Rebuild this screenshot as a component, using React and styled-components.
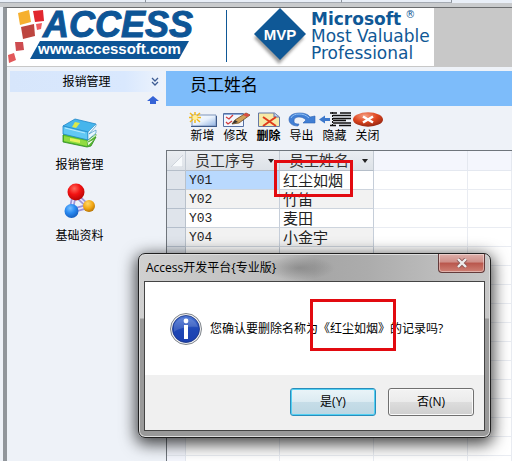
import React from 'react';
import styled, { createGlobalStyle } from 'styled-components';

const columns = ['员工序号', '员工姓名'];

const employees = [
  { code: 'Y01', name: '红尘如烟' },
  { code: 'Y02', name: '竹笛' },
  { code: 'Y03', name: '麦田' },
  { code: 'Y04', name: '小金宇' },
  { code: '', name: '' },
];

const emptyRows = Array.from({ length: 14 }, (_, i) => i);

const NewIcon = () => (
  <svg width="30" height="15" viewBox="0 0 30 15">
    <defs>
      <linearGradient id="sheet" x1="0" y1="0" x2="1" y2="1">
        <stop offset="0" stopColor="#fff" />
        <stop offset=".5" stopColor="#e8f1fc" />
        <stop offset="1" stopColor="#8fb2e2" />
      </linearGradient>
    </defs>
    <path d="M4 3h24v11H4z" fill="url(#sheet)" stroke="#7e95ba" />
    <path d="M3 14.5h26M28.5 4v10" stroke="#3d5988" />
    <path d="M7 0v11M1 5.500h12M2 1l10 9M12 1L2 10" stroke="#f2b91b" strokeWidth="1.500" />
    <circle cx="7" cy="5.500" r="2.500" fill="#ffef9c" />
  </svg>
);

const EditIcon = () => (
  <svg width="30" height="15" viewBox="0 0 30 15">
    <path d="M2.500 1.500h20v13h-20z" fill="#f3f7fe" stroke="#5670a2" />
    <path d="M3 2.500h19" stroke="#8ba9d8" />
    <path d="M5 5l3 2 4-4M5 10l2 2 4-3" fill="none" stroke="#d33a3a" strokeWidth="1.300" />
    <path d="M11 12l3-4L25 1l4 2-11 8z" fill="#d0a058" stroke="#6d4a22" strokeWidth=".8" />
    <path d="M25 1l4 2-3 2-4-2z" fill="#d84b43" />
    <path d="M11 12l3-4 3 2z" fill="#333" />
  </svg>
);

const DeleteIcon = () => (
  <svg width="30" height="15" viewBox="0 0 30 15">
    <path d="M4.500 1h16l5 4v9.500h-21z" fill="#f6e9a6" stroke="#6578a6" />
    <path d="M20 1v4h5" fill="#b9cdef" stroke="#6578a6" />
    <path d="M9 5l13 9M22 5L9 14" stroke="#df3b1c" strokeWidth="2" />
  </svg>
);

const ExportIcon = () => (
  <svg width="30" height="15" viewBox="0 0 30 15">
    <path
      d="M11 14C5 14 2 11 2 7.500 2 3 7 1 13 1c4 0 8 1 10 4l5-1v7H16l3-3c-2-2-4-3-7-3-3 0-5 1-5 4 0 2 1 3 5 3z"
      fill="#417fd4"
      stroke="#2d62b3"
      strokeWidth=".6"
    />
    <path d="M4 6c1-3 5-4 8-4 4 0 7 1 10 4" fill="none" stroke="#8fc0f5" />
  </svg>
);

const HideIcon = () => (
  <svg width="32" height="15" viewBox="0 0 32 15">
    <path d="M11 1h7M21 1h11M14 3.500h18M14 6.500h18M14 8.500h13M14 11h18M11 13.500h6M20 13.500h12" stroke="#111" strokeWidth="1.400" />
    <path d="M13.500 0v15" stroke="#111" strokeDasharray="2 1" />
    <path d="M0 7.500l6-4v2.500h5v3H6v2.500z" fill="#3c78cc" />
  </svg>
);

const CloseIcon = () => (
  <svg width="30" height="15" viewBox="0 0 30 15">
    <defs>
      <radialGradient id="closeRed" cx=".4" cy=".25" r=".8">
        <stop offset="0" stopColor="#f5a184" />
        <stop offset=".5" stopColor="#df4620" />
        <stop offset="1" stopColor="#8d2310" />
      </radialGradient>
    </defs>
    <ellipse cx="15" cy="7.500" rx="15" ry="7.200" fill="url(#closeRed)" />
    <path d="M10 4.500l10 6M20 4.500l-10 6" stroke="#fff" strokeWidth="2.600" />
  </svg>
);

const BooksIcon = () => (
  <svg width="36" height="30" viewBox="0 0 36 30">
    <path d="M1 17l4-3 29 5-5 9-4 1-24-5z" fill="#57bd2a" stroke="#2c8b20" strokeWidth=".8" />
    <path d="M2 18l23 5v5L2 23z" fill="#91dc42" />
    <path d="M8 20l10 2v3L8 23z" fill="#e7f35b" />
    <path d="M25 23l9-7v2l-8 6 7-3-7 7z" fill="#eafbe0" stroke="#47a42b" strokeWidth=".6" />
    <path d="M1 8L13 1l21 5-8 10z" fill="#46b5ec" stroke="#1f87c8" strokeWidth=".8" />
    <path d="M1 8l25 6v8L1 16z" fill="#62c8f4" stroke="#1f87c8" strokeWidth=".8" />
    <path d="M26 14l8-8v2l-7 8 7-4v3l-8 7z" fill="#e8f8ff" stroke="#2c8cc2" strokeWidth=".6" />
    <path d="M13 4l5 1-4 5-4-1z" fill="#d9e84b" />
    <path d="M3 10l20 5" stroke="#b8ebff" />
  </svg>
);

const MoleculeIcon = () => (
  <svg width="32" height="36" viewBox="0 0 32 36">
    <defs>
      <radialGradient id="redBall" cx=".4" cy=".3" r=".7">
        <stop offset="0" stopColor="#ff6a5c" />
        <stop offset=".5" stopColor="#f31313" />
        <stop offset="1" stopColor="#b80505" />
      </radialGradient>
      <radialGradient id="blueBall" cx=".4" cy=".3" r=".7">
        <stop offset="0" stopColor="#77c0ff" />
        <stop offset=".5" stopColor="#2a8bf2" />
        <stop offset="1" stopColor="#155fc0" />
      </radialGradient>
      <radialGradient id="goldBall" cx=".4" cy=".3" r=".7">
        <stop offset="0" stopColor="#ffd768" />
        <stop offset=".6" stopColor="#f2a612" />
        <stop offset="1" stopColor="#b97708" />
      </radialGradient>
    </defs>
    <path d="M10 13L7 28M14 14L25 24M7 28L25 23" stroke="#9c94d8" strokeWidth="5" />
    <path d="M10 13L7 28M14 14L25 24M7 28L25 23" stroke="#e9e5ff" strokeWidth="1.500" />
    <circle cx="12" cy="9" r="8.500" fill="url(#redBall)" />
    <circle cx="7.500" cy="28" r="7" fill="url(#blueBall)" />
    <circle cx="25" cy="23" r="6" fill="url(#goldBall)" />
  </svg>
);

const AccessLogo = () => (
  <svg width="192" height="58" viewBox="0 0 192 58" role="img" aria-label="ACCESS">
    <path d="M11 5l11-3 2 12-11 3z" fill="#f6b02f" />
    <path d="M26 3l10-1 1 11-9 1z" fill="#e1272f" />
    <path d="M14 19l13-3 1 12-12 3z" fill="#bd4640" />
    <path d="M29 16l6-1-1 6-4 1z" fill="#ee5c60" />
    <path d="M8 34l8 0 1 8-8 1z" fill="#cd4c50" />
    <path d="M1 47l6-2 2 7-7 3z" fill="#e2595b" />
    <path d="M33 33h149l-10 18H23z" fill="#0d5596" />
    <LogoWord x="36" y="29">ACCESS</LogoWord>
    <LogoUrl x="31" y="46">www.accessoft.com</LogoUrl>
  </svg>
);

const MvpLogo = () => (
  <svg width="56" height="58" viewBox="0 0 56 58" role="img" aria-label="MVP">
    <defs>
      <filter id="mvpShadow" x="-20%" y="-20%" width="140%" height="140%">
        <feGaussianBlur stdDeviation="1.500" />
      </filter>
    </defs>
    <path d="M27 5l25 25-25 26L2 30z" fill="#777" opacity=".7" filter="url(#mvpShadow)" />
    <path d="M28 0l26 26-26 26L2 26z" fill="#0f5896" />
    <MvpWord x="28" y="32" textAnchor="middle">MVP</MvpWord>
  </svg>
);

const InfoIcon = () => (
  <svg width="32" height="32" viewBox="0 0 32 32">
    <defs>
      <linearGradient id="infoBlue" x1="0" y1="0" x2="0" y2="1">
        <stop offset="0" stopColor="#4f79d6" />
        <stop offset=".5" stopColor="#1f48b6" />
        <stop offset="1" stopColor="#1b3fae" />
      </linearGradient>
    </defs>
    <circle cx="16" cy="16" r="15.500" fill="#f2f2f2" stroke="#7f858c" />
    <circle cx="16" cy="16" r="13.500" fill="url(#infoBlue)" stroke="#173180" strokeWidth=".8" />
    <path d="M4 19c5-4 14-6 24-5a13 13 0 0 0-24-2z" fill="#fff" opacity=".15" />
    <circle cx="16" cy="8" r="2.400" fill="#fff" />
    <path d="M14 12h4v14h-4z" fill="#fff" />
  </svg>
);

const tools = [
  { label: '新增', icon: <NewIcon /> },
  { label: '修改', icon: <EditIcon /> },
  { label: '删除', icon: <DeleteIcon />, active: true },
  { label: '导出', icon: <ExportIcon /> },
  { label: '隐藏', icon: <HideIcon /> },
  { label: '关闭', icon: <CloseIcon /> },
];

const App = () => {
  return (
    <>
      <GlobalStyle />
      <Page>
        <TopEdge>
          <EdgeTab $width="146px" />
          <EdgeTab $width="196px" />
          <EdgeTab $width="110px" />
        </TopEdge>
        <Frame>
          <Banner>
            <BannerArt>
              <AccessLogo />
              <Divider />
              <MvpLogo />
              <MvpText>
                <div>
                  <strong>Microsoft</strong>
                  <sup>®</sup>
                </div>
                <div>Most Valuable</div>
                <div>Professional</div>
              </MvpText>
            </BannerArt>
          </Banner>
          <Body>
            <Sidebar>
              <SidebarTitle>
                报销管理
                <Chevrons width="8" height="10" viewBox="0 0 8 10">
                  <path d="M1 1l3 3 3-3M1 5l3 3 3-3" fill="none" stroke="#3d5c94" strokeWidth="1.300" />
                </Chevrons>
              </SidebarTitle>
              <ScrollUp type="button" aria-label="向上">
                <svg width="12" height="8" viewBox="0 0 12 8">
                  <path d="M6 0l6 5H9v3H3V5H0z" fill="#3563d6" />
                </svg>
              </ScrollUp>
              <SidebarItems>
                <SidebarItem type="button">
                  <BooksIcon />
                  报销管理
                </SidebarItem>
                <SidebarItem type="button">
                  <MoleculeIcon />
                  基础资料
                </SidebarItem>
              </SidebarItems>
            </Sidebar>
            <Main>
              <Heading>员工姓名</Heading>
              <Toolbar>
                {tools.map((tool) => (
                  <ToolButton key={tool.label} type="button" $active={tool.active}>
                    {tool.icon}
                    {tool.label}
                  </ToolButton>
                ))}
              </Toolbar>
              <Datasheet>
                <Table>
                  <colgroup>
                    <Col $width="19px" />
                    <Col $width="94px" />
                    <Col $width="94px" />
                    <Col $width="94px" />
                    <col />
                  </colgroup>
                  <thead>
                    <tr>
                      <HeadCell>
                        <Corner width="12" height="12" viewBox="0 0 12 12">
                          <path d="M12 0v12H0z" fill="#f7fafc" stroke="#cfd5dc" />
                        </Corner>
                      </HeadCell>
                      {columns.map((column) => (
                        <HeadCell key={column} scope="col">
                          <HeadLabel>
                            {column}
                            <svg width="6" height="4" viewBox="0 0 6 4">
                              <path d="M0 0h6L3 4z" fill="#222" />
                            </svg>
                          </HeadLabel>
                        </HeadCell>
                      ))}
                      <BlankHead />
                      <BlankHead />
                    </tr>
                  </thead>
                  <tbody>
                    {employees.map((employee, index) => (
                      <tr key={index}>
                        <Selector />
                        <CodeCell $alt={index % 2 === 1} $selected={index === 0}>
                          {employee.code}
                        </CodeCell>
                        <Cell $alt={index % 2 === 1}>{employee.name}</Cell>
                        <BlankCell />
                        <BlankCell />
                      </tr>
                    ))}
                    {emptyRows.map((row) => (
                      <tr key={row}>
                        <BlankHead as="td" />
                        <BlankCell />
                        <BlankCell />
                        <BlankCell />
                        <BlankCell />
                      </tr>
                    ))}
                  </tbody>
                </Table>
              </Datasheet>
            </Main>
          </Body>
        </Frame>
        <RowMark />
        <Dialog role="dialog" aria-labelledby="dialog-title">
          <TitleBar>
            <DialogTitle id="dialog-title">Access开发平台{'{'}专业版{'}'}</DialogTitle>
            <DialogClose type="button" aria-label="关闭">
              <svg width="12" height="10" viewBox="0 0 12 10">
                <path d="M2 1l8 8M10 1L2 9" stroke="#8e5a58" strokeWidth="4" />
                <path d="M2 1l8 8M10 1L2 9" stroke="#eee" strokeWidth="2.400" />
              </svg>
            </DialogClose>
          </TitleBar>
          <Client>
            <Message>
              <InfoIcon />
              <span>您确认要删除名称为《红尘如烟》的记录吗?</span>
            </Message>
            <Actions>
              <DialogButton type="button" $primary>
                是(Y)
              </DialogButton>
              <DialogButton type="button">否(N)</DialogButton>
            </Actions>
          </Client>
          <NameMark />
        </Dialog>
      </Page>
    </>
  );
};

export default App;

const GlobalStyle = createGlobalStyle`
  * {
    box-sizing: border-box;
  }
  body {
    margin: 0;
    color: #000;
    font: 12px/16px "Liberation Sans", "Noto Sans CJK SC", sans-serif;
  }
  button {
    padding: 0;
    border: 0;
    background: none;
    color: inherit;
    font: inherit;
  }
  svg {
    display: block;
    flex: none;
  }
`;
const Page = styled.div`
  position: relative;
  display: flex;
  flex-direction: column;
  height: 100vh;
  overflow: hidden;
  background: #eef2f8;
`;
const TopEdge = styled.div`
  display: flex;
  flex: none;
  height: 7px;
  border-bottom: 4px solid #c9cbcd;
  background: #e9eff8;
`;
const EdgeTab = styled.span`
  width: ${(props) => props.$width};
  border-right: 1px solid #8d949d;
  border-bottom: 1px solid #a4aab2;
`;
const Frame = styled.div`
  display: flex;
  flex: 1;
  flex-direction: column;
  min-height: 0;
  margin-left: 3px;
  border-top: 1px solid #6a6c6e;
  border-left: 4px solid #91969b;
`;
const Banner = styled.header`
  display: flex;
  flex: none;
  height: 59px;
  border-bottom: 1px solid #c8c8c8;
  background: #c8c8c8;
`;
const BannerArt = styled.div`
  display: flex;
  width: 427px;
  background: #fff;
`;
const LogoWord = styled.text`
  fill: #0d5596;
  stroke: #0d5596;
  stroke-width: 1px;
  font: italic bold 36px "Liberation Sans", sans-serif;
`;
const LogoUrl = styled.text`
  fill: #fff;
  font: bold 15px "Liberation Sans", sans-serif;
`;
const Divider = styled.div`
  width: 1px;
  margin: 2px 25px 4px 27px;
  background: #0f5896;
`;
const MvpWord = styled.text`
  fill: #fff;
  font: bold 15px "Liberation Sans", sans-serif;
`;
const MvpText = styled.div`
  padding: 3px 0 0 3px;
  color: #0f5896;
  font: 17px/17px "DejaVu Sans", sans-serif;
  white-space: nowrap;

  sup {
    margin-left: 4px;
    font-size: 10px;
    line-height: 1px;
  }
`;
const Body = styled.div`
  display: flex;
  flex: 1;
  min-height: 0;
  padding-top: 4px;
`;
const Sidebar = styled.nav`
  display: flex;
  flex: none;
  flex-direction: column;
  width: 159px;
  padding: 0 3px;
`;
const SidebarTitle = styled.div`
  display: flex;
  align-items: center;
  justify-content: center;
  position: relative;
  height: 21px;
  background: linear-gradient(to right, #d7e6fb, #d9e8fe 75%, #edf3fc);
`;
const Chevrons = styled.svg`
  position: absolute;
  right: 4px;
`;
const ScrollUp = styled.button`
  align-self: flex-end;
  margin: 4px 4px 14px 0;
`;
const SidebarItems = styled.div`
  display: flex;
  flex-direction: column;
  align-items: center;
  gap: 10px;
  padding-right: 14px;
`;
const SidebarItem = styled.button`
  display: flex;
  flex-direction: column;
  align-items: center;
  gap: 9px;
  width: 72px;
`;
const Main = styled.main`
  display: flex;
  flex: 1;
  flex-direction: column;
  min-width: 0;
`;
const Heading = styled.h1`
  flex: none;
  margin: 0;
  padding: 3px 24px 0;
  height: 35px;
  background: #7dbcfa;
  font-size: 17px;
  font-weight: 400;
  line-height: 24px;
`;
const Toolbar = styled.div`
  display: flex;
  flex: none;
  height: 44px;
  padding: 6px 20px 0;
`;
const ToolButton = styled.button`
  display: flex;
  flex-direction: column;
  align-items: center;
  width: 33px;
  gap: 1px;
  height: 32px;
  font-weight: ${(props) => (props.$active ? 'bold' : 'normal')};
`;
const Datasheet = styled.div`
  flex: 1;
  min-height: 0;
  overflow: hidden;
  border-top: 1px solid #6f757c;
  border-left: 1px solid #6f757c;
  background: #fff;
`;
const Table = styled.table`
  width: 100%;
  border-spacing: 0;
  table-layout: fixed;
`;
const Col = styled.col`
  width: ${(props) => props.$width};
`;
const Cell = styled.td`
  height: 19px;
  padding: 2px 3px 0;
  border-right: 1px solid #c6ced9;
  border-bottom: 1px solid #cdd4dd;
  background: ${(props) => (props.$selected ? '#b9d9fe' : props.$alt ? '#f2f2f2' : '#fff')};
  color: #222;
  font-size: 15px;
  line-height: 16px;
  white-space: nowrap;
`;
const CodeCell = styled(Cell)`
  font-family: "Liberation Mono", monospace;
  font-size: 13px;
`;
const HeadCell = styled.th`
  height: 20px;
  padding: 0;
  border-right: 1px solid #c3cad3;
  border-bottom: 1px solid #b5bec9;
  background: linear-gradient(#eaedf1, #dde2e8);
  color: #333;
  font-size: 15px;
  font-weight: normal;
  line-height: 19px;
`;
const HeadLabel = styled.span`
  display: flex;
  align-items: center;
  justify-content: space-between;
  padding: 0 5px 0 9px;
`;
const Corner = styled.svg`
  margin-left: 4px;
`;
const Selector = styled.td`
  padding: 0;
  border-right: 1px solid #b9c1cb;
  border-bottom: 1px solid #b4becb;
  background: #dfe4eb;
`;
const BlankHead = styled.th`
  height: 19px;
  padding: 0;
  border-right: 1px solid #e4e8f0;
  border-bottom: 1px solid #e4e8f0;
  background: #f4f6fd;
`;
const BlankCell = styled.td`
  padding: 0;
  border-right: 1px solid #e9ecf2;
  border-bottom: 1px solid #e9ecf2;
`;
const RowMark = styled.div`
  position: absolute;
  top: 160px;
  left: 274px;
  width: 79px;
  height: 37px;
  border: 3px solid #e20a10;
`;
const Dialog = styled.section`
  position: absolute;
  top: 253px;
  left: 138px;
  width: 353px;
  padding: 0 5px 6px;
  border: 1px solid #202020;
  border-radius: 7px;
  background: radial-gradient(ellipse 36px 12px at 160px 14px, rgba(90, 90, 90, 0.4), transparent),
    linear-gradient(to bottom, transparent 64px, #999 65px),
    linear-gradient(to right, #d0d0d0, #bdbdbd 40%, #a6a6a6 50%, #acacac 65%, #c8c8c8);
  box-shadow: inset 0 0 0 1px #ddd, 0 4px 16px 2px rgba(0, 0, 0, 0.75);
  font-family: "Open Sans", "Noto Sans CJK SC", sans-serif;
`;
const TitleBar = styled.div`
  display: flex;
  align-items: flex-start;
  justify-content: space-between;
  height: 27px;
`;
const DialogTitle = styled.h2`
  margin: 0;
  padding: 6px 2px;
  font-size: 12px;
  font-weight: normal;
  line-height: 16px;
`;
const DialogClose = styled.button`
  display: flex;
  align-items: center;
  justify-content: center;
  width: 47px;
  height: 19px;
  border: 1px solid #643b3b;
  border-top: 0;
  border-radius: 0 0 4px 4px;
  background: linear-gradient(#deb0ab, #cf8e87 45%, #b9564c 50%, #cf8175);
  box-shadow: inset 0 0 0 1px rgba(255, 255, 255, 0.4);
`;
const Client = styled.div`
  border: 1px solid #444;
  background: #fff;
`;
const Message = styled.div`
  display: flex;
  align-items: center;
  gap: 8px;
  height: 93px;
  padding: 0 25px;
  white-space: nowrap;
`;
const Actions = styled.div`
  display: flex;
  justify-content: flex-end;
  gap: 12px;
  height: 55px;
  padding: 13px 10px;
  background: #f0f0f0;
`;
const DialogButton = styled.button`
  width: 86px;
  height: 28px;
  border: 1px solid ${(props) => (props.$primary ? '#2a8dbb' : '#707070')};
  border-radius: 3px;
  background: ${(props) =>
    props.$primary
      ? 'linear-gradient(#eaf4f8, #dcebf2 48%, #c6dde8 50%, #bcd6e2)'
      : 'linear-gradient(#f3f3f3, #ebebeb 48%, #dddddd 50%, #cfcfcf)'};
  box-shadow: inset 0 0 0 1px ${(props) => (props.$primary ? '#52d0f3' : '#fafafa')};
`;
const NameMark = styled.div`
  position: absolute;
  top: 45px;
  left: 171px;
  width: 86px;
  height: 52px;
  border: 3px solid #e20a10;
`;
